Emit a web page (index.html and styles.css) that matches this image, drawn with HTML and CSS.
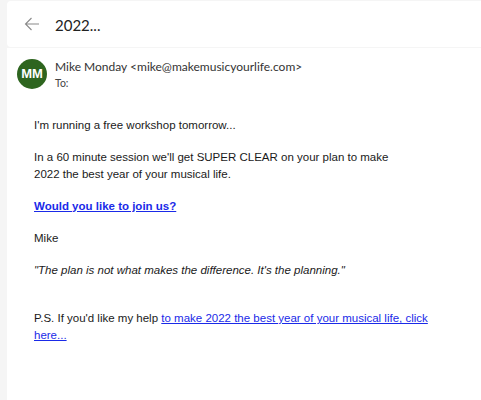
FILE: index.html
```html
<!DOCTYPE html>
<html lang="en">
<head>
  <meta charset="UTF-8" />
  <title>2022...</title>
  <link rel="stylesheet" href="styles.css">
</head>
<body>
  <div class="reader">
    <div class="topbar">
      <span class="back">
        <svg width="16" height="14" viewBox="0 0 16 14">
          <path d="M15 7H1.5M7.5 1L1.5 7l6 6" fill="none" stroke="#8a8a8a" stroke-width="1.1"/>
        </svg>
      </span>
      <h1 class="subject">2022...</h1>
    </div>

    <div class="message">
      <div class="sender">
        <div class="avatar">MM</div>
        <div class="sender-info">
          <div class="from">Mike Monday &lt;mike@makemusicyourlife.com&gt;</div>
          <div class="to">To:</div>
        </div>
      </div>

      <div class="body">
        <p>I'm running a free workshop tomorrow...</p>
        <p>In a 60 minute session we'll get SUPER CLEAR on your plan to make<br>2022 the best year of your musical life.</p>
        <p><a href="#" class="cta">Would you like to join us?</a></p>
        <p>Mike</p>
        <p class="quote">"The plan is not what makes the difference. It's the planning."</p>
        <p class="ps">P.S. If you'd like my help <a href="#">to make 2022 the best year of your musical life, click here...</a></p>
      </div>
    </div>
  </div>
</body>
</html>
```

FILE: styles.css
```css
body {
  margin: 0;
  background: #f5f5f5;
  font-family: Lato, 'Open Sans', sans-serif;
  color: #242424;
}
.reader {
  margin-left: 7px;
  padding-top: 1px;
  height: 399px;
  display: flex;
  flex-direction: column;
  gap: 1px;
}
.topbar {
  background: #fff;
  height: 46px;
  border-radius: 4px 0 0 4px;
  display: flex;
  align-items: center;
}
.back {
  width: 47px;
  display: flex;
  justify-content: center;
  padding-left: 1px;
}
.subject {
  margin: 0;
  padding-top: 2px;
  font-size: 15px;
  font-weight: 400;
  color: #222;
}
.message {
  flex: 1;
  background: #fff;
}
.sender {
  display: flex;
  align-items: center;
  padding: 7px 0 0 10px;
  gap: 8px;
}
.avatar {
  width: 30px;
  height: 30px;
  border-radius: 50%;
  background: #2e651f;
  color: #fff;
  font-family: 'Liberation Sans', sans-serif;
  font-weight: 700;
  font-size: 13px;
  display: flex;
  align-items: center;
  justify-content: center;
}
.sender-info {
  padding-top: 3px;
}
.from {
  font-size: 12px;
  color: #333;
  line-height: 17px;
}
.to {
  font-size: 10.5px;
  color: #444;
  line-height: 17px;
}
.body {
  padding: 25px 30px 0 27px;
  font-family: 'Liberation Sans', Arial, sans-serif;
  font-size: 11.5px;
  line-height: 17px;
  color: #1a1a1a;
}
.body p {
  margin: 0 0 15px;
}
.body a {
  color: #1a2ae8;
}
.cta {
  font-weight: 700;
}
.quote {
  font-style: italic;
}
.body .ps {
  margin-top: 31px;
}
```
